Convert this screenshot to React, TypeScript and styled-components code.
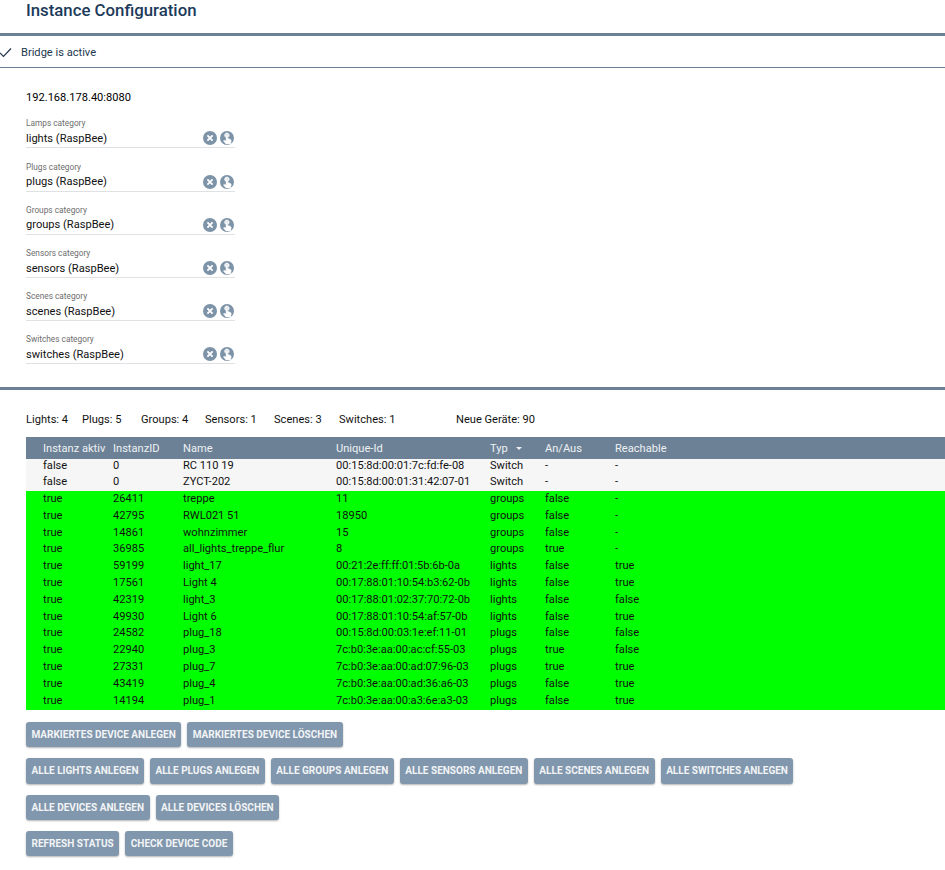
import React from "react";
import styled, { createGlobalStyle } from "styled-components";

const Global = createGlobalStyle`
  html, body { margin: 0; padding: 0; background: #fff; }
  body { font-family: Roboto, "Liberation Sans", sans-serif; color: #000; overflow: hidden; }
  * { box-sizing: border-box; }
`;

const Page = styled.div`
  width: 945px;
  height: 870px;
  overflow: hidden;
  background: #fff;
`;
const Title = styled.h1`
  margin: 0;
  height: 33px;
  padding: 0 0 0 26px;
  font-size: 16.8px;
  line-height: 21px;
  font-weight: 500;
  color: #1c3a5a;
`;
const ThickRule = styled.div`
  height: 3px;
  background: #6c8196;
`;
const StatusRow = styled.div`
  height: 32px;
  padding-top: 2px;
  display: flex;
  align-items: center;
  gap: 8px;
  font-size: 11.1px;
  color: #23384f;
  border-bottom: 1px solid #6c8196;
`;
const ConfigSection = styled.section`
  height: 319px;
  padding: 23px 0 0 26px;
`;
const Address = styled.div`
  font-size: 11.1px;
  line-height: 14px;
  margin-bottom: 13.4px;
`;
const Field = styled.div`
  position: relative;
  width: 209px;
  height: 30px;
  margin-bottom: 13.2px;
  border-bottom: 1px solid #dfe2e5;
`;
const FieldLabel = styled.div`
  font-size: 8.3px;
  line-height: 10px;
  color: #6e6e6e;
`;
const FieldValue = styled.div`
  font-size: 11.1px;
  line-height: 15px;
  margin-top: 2.6px;
  color: #111;
`;
const FieldIcons = styled.div`
  position: absolute;
  right: 1px;
  top: 13px;
  display: flex;
  gap: 3px;
`;
const Stats = styled.div`
  display: flex;
  height: 47px;
  padding: 23px 0 0 26px;
  font-size: 11.1px;
  line-height: 14px;
  color: #111;
`;
const Stat = styled.span<{ $w: number }>`
  width: ${(p) => p.$w}px;
`;
const Table = styled.div`
  margin-left: 26px;
`;
const COLS = "17px 70px 70px 153px 154px 55px 70px 1fr";
const HeadRow = styled.div`
  position: relative;
  z-index: 1;
  display: grid;
  grid-template-columns: ${COLS};
  height: 22px;
  margin-bottom: -1.4px;
  align-items: center;
  background: #6c8196;
  color: #eef1f4;
  font-size: 11.1px;
  font-weight: 400;
`;
const Row = styled.div<{ $active: boolean }>`
  display: grid;
  grid-template-columns: ${COLS};
  height: 16.8px;
  padding-bottom: 1px;
  align-items: center;
  background: ${(p) => (p.$active ? "#00ff00" : "#f6f6f6")};
  color: #111;
  font-size: 11.1px;
  line-height: 14px;
  white-space: nowrap;
`;
const SortCell = styled.span`
  display: flex;
  align-items: center;
  gap: 8px;
`;
const SortArrow = styled.span`
  width: 0;
  height: 0;
  border-left: 3.5px solid transparent;
  border-right: 3.5px solid transparent;
  border-top: 3.5px solid #eef1f4;
`;
const Actions = styled.div`
  padding: 12.4px 0 0 26px;
  display: flex;
  flex-direction: column;
`;
const ButtonRow = styled.div`
  display: flex;
  gap: 6px;
  margin-bottom: 11px;
`;
const ActionButton = styled.button`
  height: 25.33px;
  padding: 0 5.5px;
  border: 0;
  border-radius: 3px;
  background: #8197ad;
  color: #f2f4f6;
  font-family: Roboto, "Liberation Sans", sans-serif;
  font-size: 10.03px;
  font-weight: 700;
  text-transform: uppercase;
  white-space: nowrap;
  box-shadow: 0 1px 2px rgba(0, 0, 0, 0.3);
`;

const Check = () => (
  <svg width="13" height="13" viewBox="0 0 13 13" fill="none" stroke="#23384f" strokeWidth="1.2">
    <path d="M0 7l3.5 3.5L11 2.5" />
  </svg>
);
const ClearIcon = () => (
  <svg width="14" height="14" viewBox="0 0 14 14">
    <circle cx="7" cy="7" r="7" fill="#7d93a8" />
    <path d="M4.4 4.4l5.2 5.2M9.6 4.4l-5.2 5.2" stroke="#fff" strokeWidth="1.8" />
  </svg>
);
const HandIcon = () => (
  <svg width="14" height="14" viewBox="0 0 14 14">
    <circle cx="7" cy="7" r="7" fill="#7d93a8" />
    <path
      transform="translate(0.9 0.4) scale(0.52)"
      fill="#fff"
      stroke="#fff"
      strokeWidth="1"
      d="M9 11.24V7.5C9 6.12 10.12 5 11.5 5S14 6.12 14 7.5v3.74c1.21-.81 2-2.18 2-3.74C16 5.01 13.99 3 11.5 3S7 5.01 7 7.5c0 1.56.79 2.93 2 3.74zm9.84 4.63l-4.54-2.26c-.17-.07-.35-.11-.54-.11H13v-6c0-.83-.67-1.5-1.5-1.5S10 6.67 10 7.5v10.74l-3.43-.72c-.08-.01-.15-.03-.24-.03-.31 0-.59.13-.79.33l-.79.8 4.94 4.94c.27.27.65.44 1.06.44h6.79c.75 0 1.33-.55 1.44-1.28l.75-5.27c.01-.07.02-.14.02-.2 0-.62-.38-1.16-.91-1.38z"
    />
  </svg>
);

const fields = [
  ["Lamps category", "lights (RaspBee)"],
  ["Plugs category", "plugs (RaspBee)"],
  ["Groups category", "groups (RaspBee)"],
  ["Sensors category", "sensors (RaspBee)"],
  ["Scenes category", "scenes (RaspBee)"],
  ["Switches category", "switches (RaspBee)"],
];
const stats: [string, number][] = [
  ["Lights: 4", 56],
  ["Plugs: 5", 59],
  ["Groups: 4", 64],
  ["Sensors: 1", 69],
  ["Scenes: 3", 65],
  ["Switches: 1", 117],
  ["Neue Geräte: 90", 120],
];
const rows = [
  ["false", "0", "RC 110 19", "00:15:8d:00:01:7c:fd:fe-08", "Switch", "-", "-"],
  ["false", "0", "ZYCT-202", "00:15:8d:00:01:31:42:07-01", "Switch", "-", "-"],
  ["true", "26411", "treppe", "11", "groups", "false", "-"],
  ["true", "42795", "RWL021 51", "18950", "groups", "false", "-"],
  ["true", "14861", "wohnzimmer", "15", "groups", "false", "-"],
  ["true", "36985", "all_lights_treppe_flur", "8", "groups", "true", "-"],
  ["true", "59199", "light_17", "00:21:2e:ff:ff:01:5b:6b-0a", "lights", "false", "true"],
  ["true", "17561", "Light 4", "00:17:88:01:10:54:b3:62-0b", "lights", "false", "true"],
  ["true", "42319", "light_3", "00:17:88:01:02:37:70:72-0b", "lights", "false", "false"],
  ["true", "49930", "Light 6", "00:17:88:01:10:54:af:57-0b", "lights", "false", "true"],
  ["true", "24582", "plug_18", "00:15:8d:00:03:1e:ef:11-01", "plugs", "false", "false"],
  ["true", "22940", "plug_3", "7c:b0:3e:aa:00:ac:cf:55-03", "plugs", "true", "false"],
  ["true", "27331", "plug_7", "7c:b0:3e:aa:00:ad:07:96-03", "plugs", "true", "true"],
  ["true", "43419", "plug_4", "7c:b0:3e:aa:00:ad:36:a6-03", "plugs", "false", "true"],
  ["true", "14194", "plug_1", "7c:b0:3e:aa:00:a3:6e:a3-03", "plugs", "false", "true"],
];
const buttons = [
  ["Markiertes Device anlegen", "Markiertes Device löschen"],
  ["Alle Lights anlegen", "Alle Plugs anlegen", "Alle Groups anlegen", "Alle Sensors anlegen", "Alle Scenes anlegen", "Alle Switches anlegen"],
  ["Alle Devices anlegen", "Alle Devices löschen"],
  ["Refresh Status", "Check Device Code"],
];

export default function App() {
  return (
    <Page>
      <Global />
      <Title>Instance Configuration</Title>
      <ThickRule />
      <StatusRow>
        <Check />
        Bridge is active
      </StatusRow>
      <ConfigSection>
        <Address>192.168.178.40:8080</Address>
        {fields.map(([label, value]) => (
          <Field key={label}>
            <FieldLabel>{label}</FieldLabel>
            <FieldValue>{value}</FieldValue>
            <FieldIcons>
              <ClearIcon />
              <HandIcon />
            </FieldIcons>
          </Field>
        ))}
      </ConfigSection>
      <ThickRule />
      <Stats>
        {stats.map(([text, w]) => (
          <Stat key={text} $w={w}>
            {text}
          </Stat>
        ))}
      </Stats>
      <Table>
        <HeadRow>
          <span />
          <span>Instanz aktiv</span>
          <span>InstanzID</span>
          <span>Name</span>
          <span>Unique-Id</span>
          <SortCell>
            Typ
            <SortArrow />
          </SortCell>
          <span>An/Aus</span>
          <span>Reachable</span>
        </HeadRow>
        {rows.map((r) => (
          <Row key={r[3] + r[2]} $active={r[0] === "true"}>
            <span />
            {r.map((c, i) => (
              <span key={i}>{c}</span>
            ))}
          </Row>
        ))}
      </Table>
      <Actions>
        {buttons.map((group) => (
          <ButtonRow key={group[0]}>
            {group.map((b) => (
              <ActionButton key={b}>{b}</ActionButton>
            ))}
          </ButtonRow>
        ))}
      </Actions>
    </Page>
  );
}
